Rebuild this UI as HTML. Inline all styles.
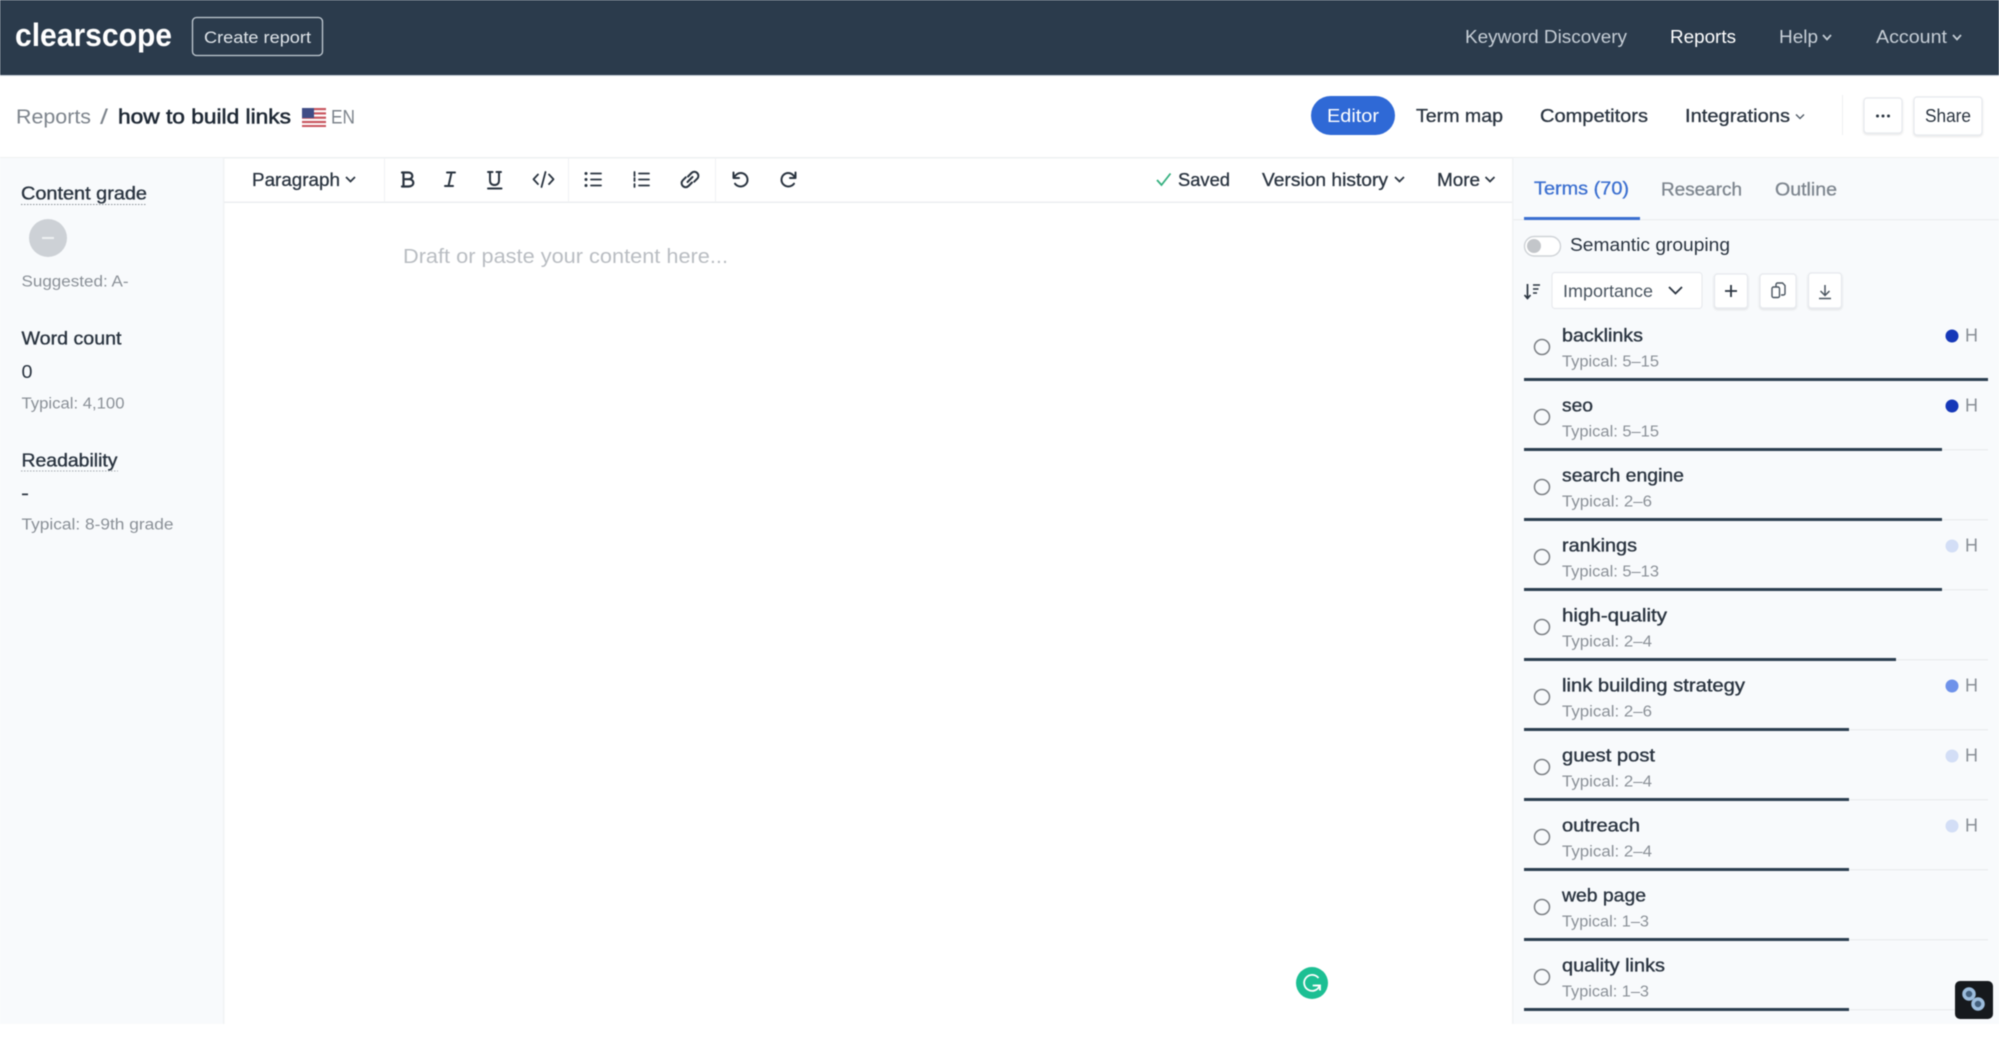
<!DOCTYPE html>
<html lang="en">
<head>
<meta charset="utf-8">
<title>how to build links - Clearscope</title>
<style>
html,body{margin:0;padding:0;background:#fff;width:1999px;height:1038px;overflow:hidden}
svg{display:block;filter:blur(.45px)}
text{font-family:"Liberation Sans",sans-serif;font-size:18px;fill:#2a3440}
.m{stroke:currentColor;stroke-width:.3}
.s{font-size:15.5px;fill:#8a9097}
.h{fill:#2a3440;stroke:#2a3440;stroke-width:.35}
.ic{fill:none;stroke:#2a3440;stroke-width:1.8;stroke-linecap:round;stroke-linejoin:round}
.btn{fill:#fff;stroke:#e6e9ed;stroke-width:1.2}
</style>
</head>
<body>
<svg width="1999" height="1038" viewBox="0 0 1999 1038" xmlns="http://www.w3.org/2000/svg">
<defs>
<filter id="sh" x="-20%" y="-20%" width="140%" height="140%"><feDropShadow dx="0" dy="1" stdDeviation="1" flood-color="#000" flood-opacity=".12"/></filter>
</defs>
<rect width="1999" height="1038" fill="#fff"/>

<!-- Top bar -->
<rect width="1999" height="75" fill="#2b3b4c"/>
<rect y="75" width="1999" height="1" fill="#c9d2da"/>
<text x="15" y="46" textLength="157" lengthAdjust="spacingAndGlyphs" style="font-size:32px;font-weight:700;fill:#fff">clearscope</text>
<rect x="192.500" y="17.500" width="130" height="38" rx="4" fill="none" stroke="#c3ccd4" stroke-width="1.3"/>
<text x="204" y="43" textLength="107" lengthAdjust="spacingAndGlyphs" style="font-size:17px;fill:#dfe4e9">Create report</text>
<text x="1465" y="43" textLength="162" lengthAdjust="spacingAndGlyphs" style="fill:#c6ced6">Keyword Discovery</text>
<text x="1670" y="43" textLength="66" lengthAdjust="spacingAndGlyphs" style="fill:#fff">Reports</text>
<text x="1779" y="43" textLength="39" lengthAdjust="spacingAndGlyphs" style="fill:#c6ced6">Help</text>
<path d="M1823 35l4 4.500 4-4.500" fill="none" stroke="#c6ced6" stroke-width="1.7"/>
<text x="1876" y="43" textLength="71" lengthAdjust="spacingAndGlyphs" style="fill:#c6ced6">Account</text>
<path d="M1953 35l4 4.500 4-4.500" fill="none" stroke="#c6ced6" stroke-width="1.7"/>

<!-- Sub header -->
<text x="16" y="123.500" textLength="75" lengthAdjust="spacingAndGlyphs" style="font-size:20px;fill:#7d848c">Reports</text>
<text x="100" y="124" textLength="8" lengthAdjust="spacingAndGlyphs" style="font-size:21px;fill:#7d848c">/</text>
<text x="118" y="123.500" textLength="173" lengthAdjust="spacingAndGlyphs" class="h" style="font-size:20.500px;fill:#1f2935;stroke:#1f2935;stroke-width:.55">how to build links</text>
<g>
<rect x="302" y="108" width="24" height="19" fill="#fff"/>
<rect x="302" y="108" width="24" height="2.200" fill="#c9565f"/>
<rect x="302" y="112.300" width="24" height="2.200" fill="#c9565f"/>
<rect x="302" y="116.600" width="24" height="2.200" fill="#c9565f"/>
<rect x="302" y="120.900" width="24" height="2.200" fill="#c9565f"/>
<rect x="302" y="125" width="24" height="2" fill="#c9565f"/>
<rect x="302" y="108" width="12" height="10" fill="#3f4d86"/>
</g>
<text x="331" y="123.500" textLength="24" lengthAdjust="spacingAndGlyphs" style="font-size:19px;fill:#7d848c">EN</text>

<rect x="1311" y="96" width="84" height="39" rx="19.500" fill="#2f69d6"/>
<text x="1327" y="122" textLength="52" lengthAdjust="spacingAndGlyphs" style="fill:#fff">Editor</text>
<text x="1416" y="122" textLength="87" lengthAdjust="spacingAndGlyphs" class="m" style="color:#2a3440">Term map</text>
<text x="1540" y="122" textLength="108" lengthAdjust="spacingAndGlyphs" class="m" style="color:#2a3440">Competitors</text>
<text x="1685" y="122" textLength="105" lengthAdjust="spacingAndGlyphs" class="m" style="color:#2a3440">Integrations</text>
<path d="M1796 114.500l4 4 4-4" fill="none" stroke="#4a5561" stroke-width="1.300"/>
<rect x="1842" y="95" width="1" height="40" fill="#eef0f2"/>
<rect x="1864" y="98" width="38" height="35" rx="3" class="btn" filter="url(#sh)"/>
<circle cx="1877.500" cy="116" r="1.500" fill="#2a3440"/><circle cx="1883" cy="116" r="1.500" fill="#2a3440"/><circle cx="1888.500" cy="116" r="1.500" fill="#2a3440"/>
<rect x="1914" y="97" width="68" height="38" rx="3" class="btn" filter="url(#sh)"/>
<text x="1925" y="122" textLength="46" lengthAdjust="spacingAndGlyphs" style="fill:#2a3440">Share</text>
<rect y="157" width="1999" height="1.500" fill="#eef0f2"/>

<!-- Left sidebar -->
<rect x="0" y="158" width="223" height="866" fill="#f8fafc"/>
<rect x="223" y="158" width="1.500" height="866" fill="#f1f3f5"/>
<text x="21" y="199.500" textLength="126" lengthAdjust="spacingAndGlyphs" class="h">Content grade</text>
<line x1="21" y1="204.500" x2="147" y2="204.500" stroke="#8b9198" stroke-width="1" stroke-dasharray="1.500 1.500"/>
<circle cx="48" cy="238" r="19" fill="#cdd1d6"/>
<rect x="42" y="237" width="12" height="2" fill="#eef0f2"/>
<text x="21.500" y="286.500" textLength="107" lengthAdjust="spacingAndGlyphs" class="s">Suggested: A-</text>
<text x="21.500" y="344.500" textLength="100" lengthAdjust="spacingAndGlyphs" class="h">Word count</text>
<text x="21.500" y="378" textLength="11" lengthAdjust="spacingAndGlyphs" style="font-size:18.500px">0</text>
<text x="21.500" y="408.500" textLength="103" lengthAdjust="spacingAndGlyphs" class="s">Typical: 4,100</text>
<text x="21.500" y="466.500" textLength="96" lengthAdjust="spacingAndGlyphs" class="h">Readability</text>
<line x1="21" y1="471" x2="118" y2="471" stroke="#a4aab0" stroke-width="1" stroke-dasharray="1.500 1.500"/>
<rect x="22" y="493.500" width="6" height="1.700" fill="#2a3440"/>
<text x="21.500" y="529.500" textLength="152" lengthAdjust="spacingAndGlyphs" class="s">Typical: 8-9th grade</text>

<!-- Editor toolbar -->
<rect x="224" y="201.500" width="1289" height="1.500" fill="#eceef0"/>
<rect x="384" y="158" width="1" height="44" fill="#f0f2f4"/>
<rect x="568" y="158" width="1" height="44" fill="#f0f2f4"/>
<rect x="715" y="158" width="1" height="44" fill="#f0f2f4"/>
<text x="252" y="186" textLength="88" lengthAdjust="spacingAndGlyphs" class="m" style="color:#2a3440">Paragraph</text>
<path d="M346 177l4.500 4.500 4.500-4.500" fill="none" stroke="#2a3440" stroke-width="1.700"/>

<!-- B -->
<path class="ic" d="M402 172.500h6c2.800 0 4.300 1.500 4.300 3.400s-1.500 3.300-4.300 3.300h-4.500m0 0h5c3 0 4.800 1.500 4.800 3.600s-1.800 3.700-4.800 3.700h-6.500m1.500-14v14" style="stroke-width:2.200"/>
<!-- I -->
<path class="ic" d="M447 172.500h8M445 186h8M451.500 172.500L448.500 186" style="stroke-width:2"/>
<!-- U -->
<path class="ic" d="M488 172h4.500M496.500 172h4.500M490 172v8.500c0 3 1.800 4.500 4.500 4.500s4.500-1.500 4.500-4.500V172M488 188.500h13.500" style="stroke-width:2"/>
<!-- code -->
<path class="ic" d="M538 174.500l-4.500 4.800 4.500 4.800M549 174.500l4.500 4.800-4.500 4.800M545.500 172l-4 15"/>
<!-- ul -->
<path class="ic" d="M591 173.500h10M591 179.500h10M591 185.500h10"/>
<circle cx="586" cy="173.500" r="1.500" fill="#2a3440"/><circle cx="586" cy="179.500" r="1.500" fill="#2a3440"/><circle cx="586" cy="185.500" r="1.500" fill="#2a3440"/>
<!-- ol -->
<path class="ic" d="M639 173.500h10M639 179.500h10M639 185.500h10M634.500 172v4M634.500 178v3M634.500 184v3"/>
<!-- link -->
<path class="ic" d="M688 176.500l3.500-3.500a4 4 0 0 1 5.700 0 4 4 0 0 1 0 5.700l-3 3M692 182.500l-3.500 3.500a4 4 0 0 1-5.700 0 4 4 0 0 1 0-5.700l3-3M687.500 182l5-5" style="stroke-width:2"/>
<!-- undo -->
<path class="ic" d="M733.500 172.500v5.500h5.500M734 177.500c1.800-3 4.200-4.500 6.800-4.500 3.700 0 6.700 3 6.700 6.700s-3 6.800-6.700 6.800c-2.500 0-4.500-1-5.800-2.800" style="stroke-width:2"/>
<!-- redo -->
<path class="ic" d="M795.500 172.500v5.500h-5.500M795 177.500c-1.800-3-4.200-4.500-6.800-4.500-3.700 0-6.700 3-6.700 6.700s3 6.800 6.700 6.800c2.500 0 4.500-1 5.800-2.800" style="stroke-width:2"/>

<path d="M1157 180l4.500 5 9-11.500" fill="none" stroke="#35b07f" stroke-width="1.800"/>
<text x="1178" y="186" textLength="52" lengthAdjust="spacingAndGlyphs" class="m" style="color:#2a3440">Saved</text>
<text x="1262" y="186" textLength="126" lengthAdjust="spacingAndGlyphs" class="m" style="color:#2a3440">Version history</text>
<path d="M1395 177l4.500 4.500 4.500-4.500" fill="none" stroke="#2a3440" stroke-width="1.700"/>
<text x="1437" y="186" textLength="43" lengthAdjust="spacingAndGlyphs" class="m" style="color:#2a3440">More</text>
<path d="M1485.500 177l4.500 4.500 4.500-4.500" fill="none" stroke="#2a3440" stroke-width="1.700"/>

<text x="403" y="263" textLength="325" lengthAdjust="spacingAndGlyphs" style="font-size:20.500px;fill:#b9bdc2">Draft or paste your content here...</text>

<!-- Right panel -->
<rect x="1513" y="158" width="486" height="866" fill="#f8fafc"/>
<rect x="1512" y="158" width="1.500" height="866" fill="#f1f3f5"/>
<text x="1534" y="194.500" textLength="95" lengthAdjust="spacingAndGlyphs" class="m" style="fill:#3b6fd0;color:#3b6fd0">Terms (70)</text>
<text x="1661" y="195.500" textLength="81" lengthAdjust="spacingAndGlyphs" class="m" style="fill:#7d858e;color:#7d858e">Research</text>
<text x="1775" y="195.500" textLength="62" lengthAdjust="spacingAndGlyphs" class="m" style="fill:#7d858e;color:#7d858e">Outline</text>
<rect x="1513" y="219" width="486" height="1.500" fill="#eef0f2"/>
<rect x="1524" y="217" width="116" height="3" fill="#3b6fd0"/>

<rect x="1524.500" y="236.500" width="36" height="19.500" rx="9.750" fill="#fff" stroke="#cfd3d7" stroke-width="1.400"/>
<circle cx="1534" cy="246" r="7" fill="#c3c6ca"/>
<text x="1570" y="251" textLength="160" lengthAdjust="spacingAndGlyphs" style="fill:#2a3440">Semantic grouping</text>

<path d="M1527.500 284v14M1524.500 295l3 3.500 3-3.500" fill="none" stroke="#2a3440" stroke-width="1.700"/>
<path d="M1533 285h7M1533 289h5.500M1533 293h4" fill="none" stroke="#2a3440" stroke-width="1.500"/>
<rect x="1552" y="272.500" width="150" height="36" rx="3" fill="#fff" stroke="#e8eaee" stroke-width="1.200"/>
<text x="1563" y="297" textLength="90" lengthAdjust="spacingAndGlyphs" style="font-size:17.500px;fill:#4a5560">Importance</text>
<path d="M1669 287l6.500 6.500 6.500-6.500" fill="none" stroke="#2a3440" stroke-width="1.800"/>
<rect x="1714.500" y="274" width="33" height="34" rx="3" class="btn" filter="url(#sh)"/>
<path d="M1731 285v12M1725 291h12" stroke="#2a3440" stroke-width="1.800" fill="none"/>
<rect x="1760" y="274" width="36" height="34" rx="3" class="btn" filter="url(#sh)"/>
<path d="M1776 287v-2.500a1.500 1.500 0 0 1 1.500-1.500h5l2.500 2.500v8a1.500 1.500 0 0 1-1.500 1.500H1781M1773.500 287h4.500a1.500 1.500 0 0 1 1.500 1.500v7.500a1.500 1.500 0 0 1-1.500 1.500h-4.500a1.500 1.500 0 0 1-1.500-1.500v-7.500a1.500 1.500 0 0 1 1.500-1.500z" fill="none" stroke="#4a5560" stroke-width="1.400"/>
<rect x="1808.500" y="273" width="33" height="35" rx="3" class="btn" filter="url(#sh)"/>
<path d="M1825 285v10.500M1820.500 291l4.500 4.500 4.500-4.500M1819 298.500h12" fill="none" stroke="#4a5560" stroke-width="1.500"/>

<!-- Term rows -->
<g>
<circle cx="1542" cy="347" r="7.500" fill="none" stroke="#7b7f84" stroke-width="1.500"/>
<text x="1562" y="341.500" textLength="81" lengthAdjust="spacingAndGlyphs" class="h">backlinks</text>
<text x="1562" y="366.500" textLength="97" lengthAdjust="spacingAndGlyphs" class="s">Typical: 5–15</text>
<rect x="1524" y="378" width="464" height="3" fill="#2c3e50"/>
<circle cx="1952" cy="336" r="6.500" fill="#1638b8"/><text x="1965" y="341.500" textLength="13" lengthAdjust="spacingAndGlyphs" style="fill:#8a9097">H</text>

<circle cx="1542" cy="417" r="7.500" fill="none" stroke="#7b7f84" stroke-width="1.500"/>
<text x="1562" y="411.500" textLength="31" lengthAdjust="spacingAndGlyphs" class="h">seo</text>
<text x="1562" y="436.500" textLength="97" lengthAdjust="spacingAndGlyphs" class="s">Typical: 5–15</text>
<rect x="1524" y="449" width="464" height="1.500" fill="#eceef0"/>
<rect x="1524" y="448" width="418" height="3" fill="#2c3e50"/>
<circle cx="1952" cy="406" r="6.500" fill="#1638b8"/><text x="1965" y="411.500" textLength="13" lengthAdjust="spacingAndGlyphs" style="fill:#8a9097">H</text>

<circle cx="1542" cy="487" r="7.500" fill="none" stroke="#7b7f84" stroke-width="1.500"/>
<text x="1562" y="481.500" textLength="122" lengthAdjust="spacingAndGlyphs" class="h">search engine</text>
<text x="1562" y="506.500" textLength="90" lengthAdjust="spacingAndGlyphs" class="s">Typical: 2–6</text>
<rect x="1524" y="519" width="464" height="1.500" fill="#eceef0"/>
<rect x="1524" y="518" width="418" height="3" fill="#2c3e50"/>

<circle cx="1542" cy="557" r="7.500" fill="none" stroke="#7b7f84" stroke-width="1.500"/>
<text x="1562" y="551.500" textLength="75" lengthAdjust="spacingAndGlyphs" class="h">rankings</text>
<text x="1562" y="576.500" textLength="97" lengthAdjust="spacingAndGlyphs" class="s">Typical: 5–13</text>
<rect x="1524" y="589" width="464" height="1.500" fill="#eceef0"/>
<rect x="1524" y="588" width="418" height="3" fill="#2c3e50"/>
<circle cx="1952" cy="546" r="6.500" fill="#d3def6"/><text x="1965" y="551.500" textLength="13" lengthAdjust="spacingAndGlyphs" style="fill:#8a9097">H</text>

<circle cx="1542" cy="627" r="7.500" fill="none" stroke="#7b7f84" stroke-width="1.500"/>
<text x="1562" y="621.500" textLength="105" lengthAdjust="spacingAndGlyphs" class="h">high-quality</text>
<text x="1562" y="646.500" textLength="90" lengthAdjust="spacingAndGlyphs" class="s">Typical: 2–4</text>
<rect x="1524" y="659" width="464" height="1.500" fill="#eceef0"/>
<rect x="1524" y="658" width="372" height="3" fill="#2c3e50"/>

<circle cx="1542" cy="697" r="7.500" fill="none" stroke="#7b7f84" stroke-width="1.500"/>
<text x="1562" y="691.500" textLength="183" lengthAdjust="spacingAndGlyphs" class="h">link building strategy</text>
<text x="1562" y="716.500" textLength="90" lengthAdjust="spacingAndGlyphs" class="s">Typical: 2–6</text>
<rect x="1524" y="729" width="464" height="1.500" fill="#eceef0"/>
<rect x="1524" y="728" width="325" height="3" fill="#2c3e50"/>
<circle cx="1952" cy="686" r="6.500" fill="#6e92ea"/><text x="1965" y="691.500" textLength="13" lengthAdjust="spacingAndGlyphs" style="fill:#8a9097">H</text>

<circle cx="1542" cy="767" r="7.500" fill="none" stroke="#7b7f84" stroke-width="1.500"/>
<text x="1562" y="761.500" textLength="93" lengthAdjust="spacingAndGlyphs" class="h">guest post</text>
<text x="1562" y="786.500" textLength="90" lengthAdjust="spacingAndGlyphs" class="s">Typical: 2–4</text>
<rect x="1524" y="799" width="464" height="1.500" fill="#eceef0"/>
<rect x="1524" y="798" width="325" height="3" fill="#2c3e50"/>
<circle cx="1952" cy="756" r="6.500" fill="#d3def6"/><text x="1965" y="761.500" textLength="13" lengthAdjust="spacingAndGlyphs" style="fill:#8a9097">H</text>

<circle cx="1542" cy="837" r="7.500" fill="none" stroke="#7b7f84" stroke-width="1.500"/>
<text x="1562" y="831.500" textLength="78" lengthAdjust="spacingAndGlyphs" class="h">outreach</text>
<text x="1562" y="856.500" textLength="90" lengthAdjust="spacingAndGlyphs" class="s">Typical: 2–4</text>
<rect x="1524" y="869" width="464" height="1.500" fill="#eceef0"/>
<rect x="1524" y="868" width="325" height="3" fill="#2c3e50"/>
<circle cx="1952" cy="826" r="6.500" fill="#d3def6"/><text x="1965" y="831.500" textLength="13" lengthAdjust="spacingAndGlyphs" style="fill:#8a9097">H</text>

<circle cx="1542" cy="907" r="7.500" fill="none" stroke="#7b7f84" stroke-width="1.500"/>
<text x="1562" y="901.500" textLength="84" lengthAdjust="spacingAndGlyphs" class="h">web page</text>
<text x="1562" y="926.500" textLength="87" lengthAdjust="spacingAndGlyphs" class="s">Typical: 1–3</text>
<rect x="1524" y="939" width="464" height="1.500" fill="#eceef0"/>
<rect x="1524" y="938" width="325" height="3" fill="#2c3e50"/>

<circle cx="1542" cy="977" r="7.500" fill="none" stroke="#7b7f84" stroke-width="1.500"/>
<text x="1562" y="971.500" textLength="103" lengthAdjust="spacingAndGlyphs" class="h">quality links</text>
<text x="1562" y="996.500" textLength="87" lengthAdjust="spacingAndGlyphs" class="s">Typical: 1–3</text>
<rect x="1524" y="1009" width="464" height="1.500" fill="#eceef0"/>
<rect x="1524" y="1008" width="325" height="3" fill="#2c3e50"/>
</g>

<!-- Grammarly -->
<circle cx="1312" cy="983" r="16" fill="#1cbf93"/>
<path d="M1318.500 978a8 8 0 1 0 1.200 7.500h-7" fill="none" stroke="#fff" stroke-width="1.800"/>
<path d="M1315 985.500h5v5" fill="none" stroke="#fff" stroke-width="1.800"/>

<!-- Floating dark button -->
<rect x="1955" y="981" width="38" height="38" rx="5" fill="#16191d"/>
<circle cx="1969" cy="994" r="5" fill="#44607d" stroke="#9cbcdc" stroke-width="3.500"/>
<circle cx="1978" cy="1004" r="5" fill="#44607d" stroke="#9cbcdc" stroke-width="3.500"/>
</svg>
</body>
</html>
